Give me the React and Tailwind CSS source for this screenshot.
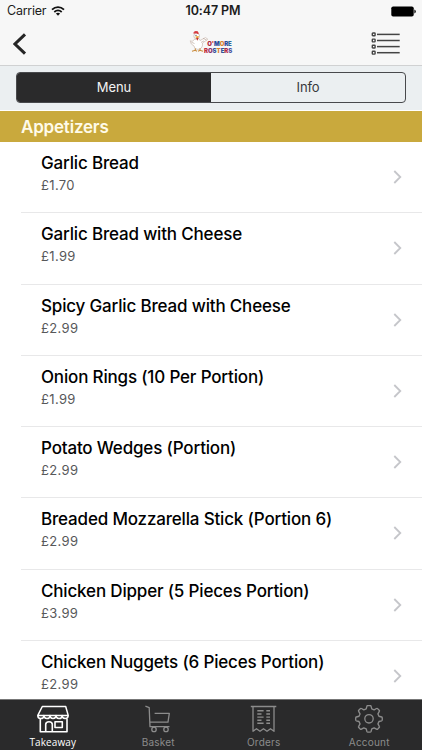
import React from 'react';

const items = [
  ['Garlic Bread', '£1.70'],
  ['Garlic Bread with Cheese', '£1.99'],
  ['Spicy Garlic Bread with Cheese', '£2.99'],
  ['Onion Rings (10 Per Portion)', '£1.99'],
  ['Potato Wedges (Portion)', '£2.99'],
  ['Breaded Mozzarella Stick (Portion 6)', '£2.99'],
  ['Chicken Dipper (5 Pieces Portion)', '£3.99'],
  ['Chicken Nuggets (6 Pieces Portion)', '£2.99'],
];

function StatusBar() {
  return (
    <div className="flex h-[22px] items-center justify-between pr-[6px] pl-[7px] text-[12.5px] text-[#1c1c1c]">
      <div className="flex w-[120px] items-center gap-[5px]">
        <span className="tracking-[-0.25px]">Carrier</span>
        <svg width="14" height="10" viewBox="0 0 14 10" fill="none" stroke="#111" strokeWidth="1.8">
          <path d="M1 3.7C4.5 0.3 9.5 0.3 13 3.7" />
          <path d="M3.3 6C5.5 4 8.5 4 10.7 6" />
          <path d="M4.9 7.5C6.1 6.5 7.9 6.5 9.1 7.5L7 9.7Z" fill="#111" stroke="none" />
        </svg>
      </div>
      <span className="ml-[3px] text-[12.5px] font-semibold tracking-[-0.1px]">10:47 PM</span>
      <div className="flex w-[120px] justify-end">
        <svg width="25" height="11" viewBox="0 0 25 11">
          <rect x="0.3" y="0.5" width="22.4" height="10" rx="1.8" fill="#000" />
          <path d="M23.4 3.5Q24.8 4 24.8 5.5T23.4 7.5Z" fill="#000" />
        </svg>
      </div>
    </div>
  );
}

function Logo() {
  return (
    <svg width="44" height="26" viewBox="0 0 44 26">
      <path d="M5.5 9.5Q3 12.5 1.2 10.8Q1.5 14.5 5 16L6 18.5Q9 20.5 12 18.3Q14 16.5 13.5 13L18.8 9.2L16.5 7.6L11 10.5L9.8 8.5Z" fill="#fff" stroke="#c9b7ae" strokeWidth="0.7" />
      <path d="M2.5 12.3L5.5 13.5M14 8.3L17.5 10M15 10.8L12 12.5" fill="none" stroke="#b39e90" strokeWidth="0.6" />
      <circle cx="7.7" cy="6" r="2.9" fill="#fff" stroke="#c0aba0" strokeWidth="0.6" />
      <path d="M4.7 3.8Q3.6 2 5.2 2.2Q5.4 0.6 7 1.3Q8.6 0.3 9 2Q10.4 2.8 9.3 4.2L7 3.3Z" fill="#d63a3f" />
      <circle cx="7" cy="5.3" r="0.6" fill="#333" />
      <path d="M6.3 6.4L10 6.1L9 7.9L6.8 7.8Z" fill="#eda22c" />
      <path d="M7 8L9.6 7.8L8.5 10.8Z" fill="#c93530" />
      <path d="M6.3 18.5V20.6M3 21.3L6.3 20.3L8 21.3M11 18.5V20.6M9 21.3L11 20.3L14 21.3" fill="none" stroke="#c98a3a" strokeWidth="1.1" />
      <g fontFamily="Inter, sans-serif" fontWeight="900" fontSize="6">
        <text x="18.3" y="16" textLength="24.5" lengthAdjust="spacing">
          <tspan fill="#b0283a">O</tspan><tspan fill="#d94732">'</tspan><tspan fill="#2c4a9a">M</tspan><tspan fill="#d9832b">O</tspan><tspan fill="#2c4a9a">R</tspan><tspan fill="#2f6a9b">E</tspan>
        </text>
        <text x="15" y="22.8" textLength="28.3" lengthAdjust="spacing">
          <tspan fill="#c0303b">R</tspan><tspan fill="#8a2f6b">O</tspan><tspan fill="#334f9b">S</tspan><tspan fill="#dc8031">T</tspan><tspan fill="#315699">E</tspan><tspan fill="#b52945">R</tspan><tspan fill="#4a55a1">S</tspan>
        </text>
      </g>
    </svg>
  );
}

function NavBar() {
  return (
    <div className="flex h-[43px] items-center justify-between pr-[21px] pl-[13px]">
      <div className="w-[120px]">
        <svg width="14" height="22" viewBox="0 0 14 22" fill="none" stroke="#262626" strokeWidth="3">
          <path d="M12 1.3L2 11 12 20.7" />
        </svg>
      </div>
      <div className="mr-[-8px] mb-[2px]"><Logo /></div>
      <div className="flex w-[120px] justify-end">
        <svg width="30" height="24" viewBox="0 0 30 24" fill="none" stroke="#444">
          {[2.4, 8.5, 14.6, 20.7].map((y) => (
            <g key={y}>
              <rect x="1.3" y={y - 1.4} width="2.8" height="2.8" rx="0.6" strokeWidth="1.4" />
              <path d={`M6 ${y}H28.7`} strokeWidth="1.5" />
            </g>
          ))}
        </svg>
      </div>
    </div>
  );
}

function Tab({ label, active, children }) {
  return (
    <div className={active ? 'flex flex-1 flex-col items-center text-white' : 'flex flex-1 flex-col items-center text-[#8c8c8c]'}>
      <svg className="mt-[5px]" width="32" height="30" viewBox="0 0 32 30" fill="none" stroke="currentColor" strokeWidth="1.3" strokeLinejoin="round">
        {children}
      </svg>
      <span className={active ? "mt-[1px] font-['Open_Sans'] text-[10px] leading-[13px] font-medium tracking-[0.1px]" : 'mt-[1px] text-[10px] leading-[13px] tracking-[0.2px]'}>{label}</span>
    </div>
  );
}

export default function App() {
  return (
    <div className="flex h-[750px] w-[422px] flex-col overflow-hidden bg-white font-[Inter,'Liberation_Sans',sans-serif]">
      <header className="h-[66px] shrink-0 border-b border-[#d0d1d2] bg-[#f7f7f7]">
        <StatusBar />
        <NavBar />
      </header>
      <div className="h-[45px] shrink-0 border-b border-white bg-[#ebeff1] px-4 pt-[6px]">
        <div className="flex h-[31px] w-[390px] overflow-hidden rounded-[4px] border border-[#48494c] text-[13px] tracking-[-0.1px]">
          <div className="flex flex-1 items-center justify-center bg-[#2a2a2b] pt-px text-[#f3f3f3]">Menu</div>
          <div className="flex flex-1 items-center justify-center pt-px text-[#38393c]">Info</div>
        </div>
      </div>
      <div className="flex h-[31px] shrink-0 items-center bg-[#c9a93d] pt-[2px] pl-[21px] text-[17px] font-semibold tracking-[-0.2px] text-[#fffbe9]">Appetizers</div>
      <main className="min-h-0 flex-1 overflow-hidden">
        {items.map(([name, price]) => (
          <div key={name} className="ml-[21px] flex h-[71.25px] items-center justify-between border-b border-[#e8e8e9] pr-5">
            <div className="pb-[7px] pl-5">
              <div className="text-[17px] leading-[24px] font-medium tracking-[-0.17px] text-black">{name}</div>
              <div className="mt-[-1px] text-[13px] leading-[22px] tracking-[0.35px] text-[#57585a]">{price}</div>
            </div>
            <svg width="9" height="14" viewBox="0 0 9 14" fill="none" stroke="#c5c6ca" strokeWidth="1.8">
              <path d="M1.3 1L7.3 7 1.3 13" />
            </svg>
          </div>
        ))}
      </main>
      <nav className="flex h-[51px] shrink-0 border-t border-[#777] bg-[#2a2a2b]">
        <Tab label="Takeaway" active>
          <path d="M5.3 1.5H28.7L31.2 10.4H0.8Z" strokeWidth="1.5" />
          <path d="M0.8 10.4Q0.8 13.5 3.8 13.5T6.9 10.6Q6.9 13.5 9.9 13.5T13 10.6Q13 13.5 16 13.5T19 10.6Q19 13.5 22 13.5T25.1 10.6Q25.1 13.5 28.1 13.5T31.2 10.4" strokeWidth="1.5" />
          <path d="M3.3 13.5V26.8H30V13.5M8.7 26.8V19.5Q8.7 16.7 12 16.7T15.3 19.5V26.8M18 16.7H25.3V22.5H18Z" strokeWidth="1.6" />
        </Tab>
        <Tab label="Basket">
          <path d="M3.4 1.2L7.2 2.6L8 21.7H27.5" />
          <path d="M12.6 8.3H27.3L26 17.2H8" />
          <circle cx="12" cy="24.4" r="2.2" /><circle cx="24" cy="24.4" r="2.2" />
        </Tab>
        <Tab label="Orders">
          <path d="M2.8 1.5H28.3M5 1.5V26.3L8.5 23.7 12 26.3 15.5 23.7 19 26.3 22.5 23.7 26 26.3V1.5" />
          <path d="M9.3 5.7H15.6M18.3 5.7H22M9.3 9H13.5M18.3 9H22M9.3 12.1H15.6M18.3 12.1H22M9.3 15.2H13.5M18.3 15.2H22M9.3 18.3H15.6M18.3 18.3H22" strokeWidth="1.4" />
        </Tab>
        <Tab label="Account">
          <path transform="translate(-0.5 -1.3) scale(1.03)" d="M13.3 5L14 2.4Q14.2 1.8 15 1.8H17Q17.8 1.8 18 2.4L18.7 5L21 6L23.3 4.7Q24 4.3 24.5 4.9L25.9 6.3Q26.4 6.9 26 7.5L24.7 9.9L25.7 12.2L28.3 12.9Q28.9 13.1 28.9 13.8V15.7Q28.9 16.4 28.3 16.6L25.7 17.3L24.7 19.6L26 22Q26.4 22.6 25.9 23.1L24.5 24.6Q24 25.1 23.3 24.7L21 23.4L18.7 24.4L18 27Q17.8 27.6 17 27.6H15Q14.2 27.6 14 27L13.3 24.4L11 23.4L8.7 24.7Q8 25.1 7.5 24.6L6.1 23.1Q5.6 22.6 6 22L7.3 19.6L6.3 17.3L3.7 16.6Q3.1 16.4 3.1 15.7V13.8Q3.1 13.1 3.7 12.9L6.3 12.2L7.3 9.9L6 7.5Q5.6 6.9 6.1 6.3L7.5 4.9Q8 4.3 8.7 4.7L11 6Z" />
          <circle cx="16" cy="13.8" r="4.2" />
        </Tab>
      </nav>
    </div>
  );
}
